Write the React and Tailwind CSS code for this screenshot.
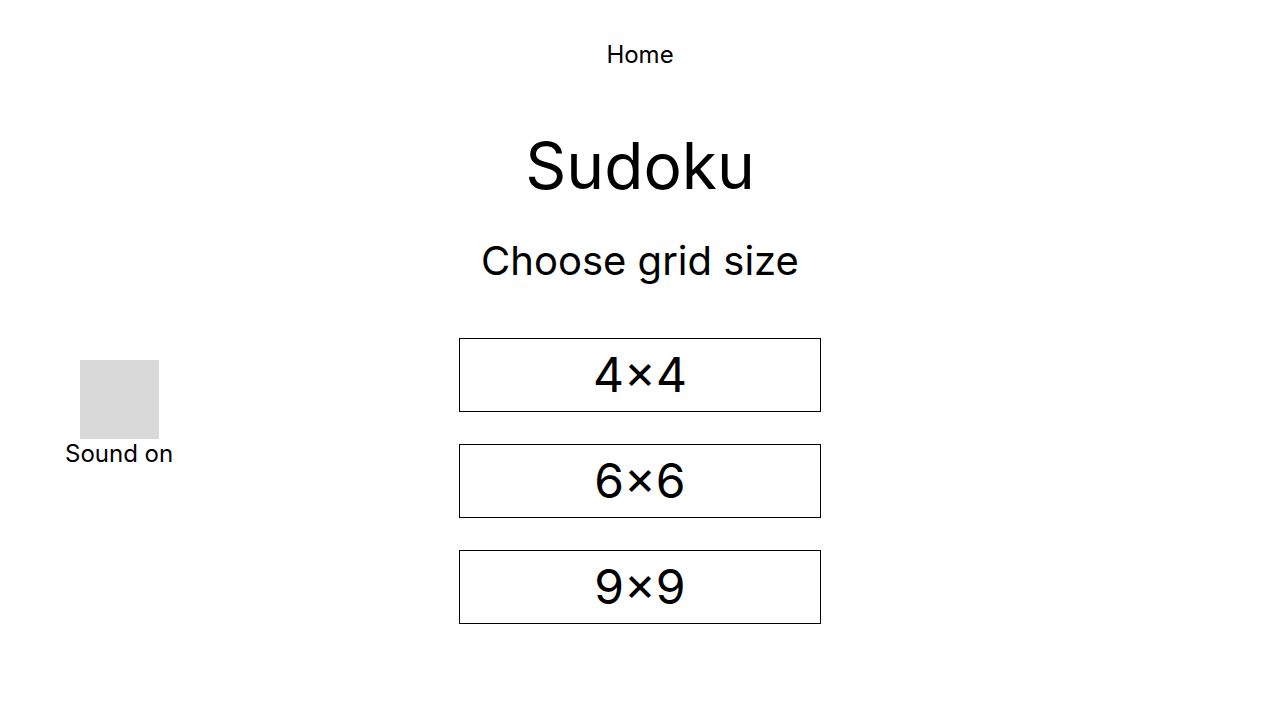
const sizes = ["4×4", "6×6", "9×9"];

export default function App() {
  return (
    <div className="grid min-h-screen grid-cols-[1fr_362px_1fr] bg-white font-['Inter',sans-serif] text-black">
      <aside className="pt-[50vh] pl-[65px]">
        <button type="button" className="flex flex-col items-center text-2xl leading-[29px]">
          <span className="size-[79px] bg-[#d9d9d9]" />
          Sound on
        </button>
      </aside>
      <main className="flex flex-col items-center pt-10 pb-24 text-center">
        <a href="#home" className="text-2xl leading-[29px]">Home</a>
        <h1 className="mt-[58px] text-[64px] leading-[78px]">Sudoku</h1>
        <h2 className="mt-8 text-[40px] leading-12">Choose grid size</h2>
        <div className="mt-[53px] flex w-full flex-col gap-8">
          {sizes.map((size) => (
            <button key={size} type="button" className="h-[74px] border border-black text-5xl leading-[58px]">
              {size}
            </button>
          ))}
        </div>
      </main>
    </div>
  );
}
